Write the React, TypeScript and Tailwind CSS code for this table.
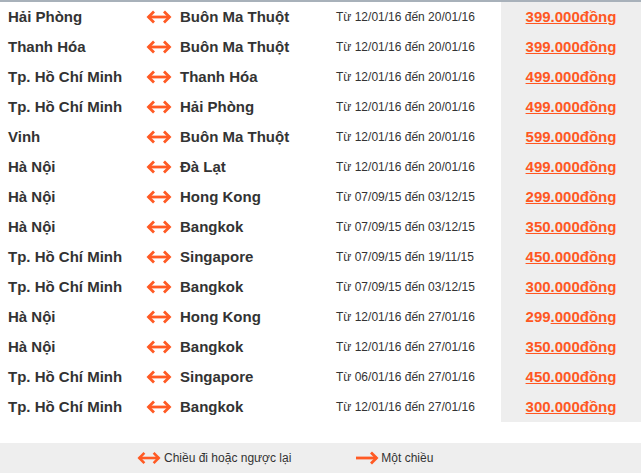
import React from "react";

type Row = { from: string; to: string; date: string; price: string; partial?: boolean };

const rows: Row[] = [
  { from: "Hải Phòng", to: "Buôn Ma Thuột", date: "Từ 12/01/16 đến 20/01/16", price: "399.000đồng" },
  { from: "Thanh Hóa", to: "Buôn Ma Thuột", date: "Từ 12/01/16 đến 20/01/16", price: "399.000đồng" },
  { from: "Tp. Hồ Chí Minh", to: "Thanh Hóa", date: "Từ 12/01/16 đến 20/01/16", price: "499.000đồng" },
  { from: "Tp. Hồ Chí Minh", to: "Hải Phòng", date: "Từ 12/01/16 đến 20/01/16", price: "499.000đồng" },
  { from: "Vinh", to: "Buôn Ma Thuột", date: "Từ 12/01/16 đến 20/01/16", price: "599.000đồng" },
  { from: "Hà Nội", to: "Đà Lạt", date: "Từ 12/01/16 đến 20/01/16", price: "499.000đồng" },
  { from: "Hà Nội", to: "Hong Kong", date: "Từ 07/09/15 đến 03/12/15", price: "299.000đồng" },
  { from: "Hà Nội", to: "Bangkok", date: "Từ 07/09/15 đến 03/12/15", price: "350.000đồng" },
  { from: "Tp. Hồ Chí Minh", to: "Singapore", date: "Từ 07/09/15 đến 19/11/15", price: "450.000đồng" },
  { from: "Tp. Hồ Chí Minh", to: "Bangkok", date: "Từ 07/09/15 đến 03/12/15", price: "300.000đồng" },
  { from: "Hà Nội", to: "Hong Kong", date: "Từ 12/01/16 đến 27/01/16", price: "299.000đồng", partial: true },
  { from: "Hà Nội", to: "Bangkok", date: "Từ 12/01/16 đến 27/01/16", price: "350.000đồng" },
  { from: "Tp. Hồ Chí Minh", to: "Singapore", date: "Từ 06/01/16 đến 27/01/16", price: "450.000đồng" },
  { from: "Tp. Hồ Chí Minh", to: "Bangkok", date: "Từ 12/01/16 đến 27/01/16", price: "300.000đồng" },
];

function DoubleArrow({ w = 26 }: { w?: number }) {
  return (
    <svg width={w} height="14" viewBox="0 0 26 14" fill="none" stroke="#ff5a24" strokeWidth="2.8" strokeLinecap="butt" strokeLinejoin="miter">
      <line x1="2" y1="7" x2="24" y2="7" />
      <polyline points="8,1.5 2.5,7 8,12.5" />
      <polyline points="18,1.5 23.5,7 18,12.5" />
    </svg>
  );
}

function SingleArrow() {
  return (
    <svg width="23" height="14" viewBox="0 0 23 14" fill="none" stroke="#ff5a24" strokeWidth="2.8" strokeLinecap="butt" strokeLinejoin="miter">
      <line x1="0" y1="7" x2="21" y2="7" />
      <polyline points="15,1.5 20.5,7 15,12.5" />
    </svg>
  );
}

export default function App() {
  return (
    <div className="w-[641px] h-[475px] bg-white font-['Liberation_Sans',Arial,sans-serif] overflow-hidden">
      <div className="border-t-2 border-[#a8b1ba]">
        {rows.map((r, i) => (
          <div key={i} className="flex items-center h-[30px]">
            <div className="w-[146px] pl-2 text-[15px] font-bold text-[#333]">{r.from}</div>
            <div className="w-[34px] flex items-center">
              <DoubleArrow />
            </div>
            <div className="w-[156px] text-[15px] font-bold text-[#333]">{r.to}</div>
            <div className="w-[165px] text-[12px] text-[#333]">{r.date}</div>
            <div className="flex-1 h-full bg-[#eeeeee] flex items-center justify-center">
              {r.partial ? (
                <span className="text-[15px] font-bold text-[#ff5722]">
                  <span>{r.price.slice(0, 3)}</span>
                  <span className="underline">{r.price.slice(3)}</span>
                </span>
              ) : (
                <span className="text-[15px] font-bold text-[#ff5722] underline">{r.price}</span>
              )}
            </div>
          </div>
        ))}
      </div>
      <div className="mt-[21px] h-[30px] bg-[#eeeeee] flex items-center text-[12px] text-[#333]">
        <div className="pl-[137px] flex items-center">
          <DoubleArrow w={24} />
          <span className="ml-[3px]">Chiều đi hoặc ngược lại</span>
        </div>
        <div className="ml-[65px] flex items-center">
          <SingleArrow />
          <span className="ml-[2px]">Một chiều</span>
        </div>
      </div>
    </div>
  );
}
